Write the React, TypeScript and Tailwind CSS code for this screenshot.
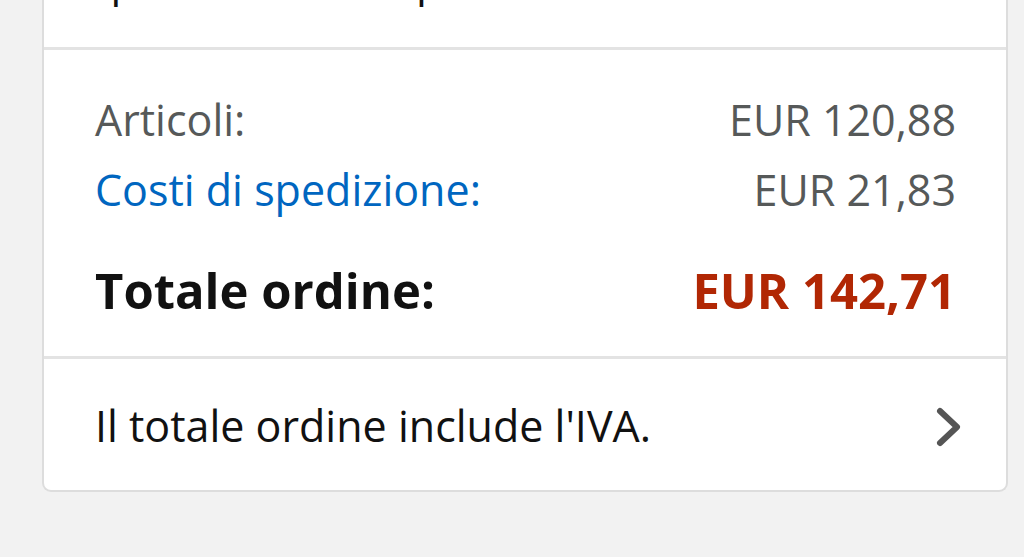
type Row = {
  label: string;
  amount: string;
  link?: boolean;
};

const rows: Row[] = [
  { label: 'Articoli:', amount: 'EUR 120,88' },
  { label: 'Costi di spedizione:', amount: 'EUR 21,83', link: true },
];

export default function App() {
  return (
    <div
      className="h-[557px] w-full overflow-hidden bg-[#f2f2f2] pl-[42px] pr-[16px]"
      style={{ fontFamily: '"Open Sans", "Noto Sans", sans-serif' }}
    >
      <div className="-mt-[60px] rounded-b-[9px] border-2 border-t-0 border-[#dddddd] bg-white">
        <div className="h-[110px] border-b-[3px] border-[#e3e3e3] px-[51px] pt-[15px]">
          <p className="text-[43px] leading-[50px] text-[#111]">
            quando sarà disponibile.
          </p>
        </div>

        <div className="border-b-[3px] border-[#e3e3e3] pl-[51px] pr-[50px] pt-[35px] pb-[34px]">
          {rows.map((r) => (
            <div
              key={r.label}
              className="flex items-center justify-between text-[43px] leading-[70px] text-[#565959]"
            >
              <span className={r.link ? 'text-[#0066c0]' : ''}>{r.label}</span>
              <span>{r.amount}</span>
            </div>
          ))}
          <div className="mt-[33px] flex items-center justify-between text-[49px] leading-[64px] font-bold">
            <span className="text-[#111]">Totale ordine:</span>
            <span className="text-[#b12704]">EUR 142,71</span>
          </div>
        </div>

        <div className="flex h-[131px] items-center justify-between pl-[51px] pr-[44px] pt-[4px]">
          <span className="text-[43px] text-[#111]">Il totale ordine include l'IVA.</span>
          <svg
            className="h-[44px] w-[30px] text-[#555]"
            viewBox="0 0 30 44"
            fill="none"
            stroke="currentColor"
            strokeWidth={6}
            strokeLinecap="round"
            strokeLinejoin="round"
          >
            <polyline points="8,6 25,22 8,38" />
          </svg>
        </div>
      </div>
    </div>
  );
}
